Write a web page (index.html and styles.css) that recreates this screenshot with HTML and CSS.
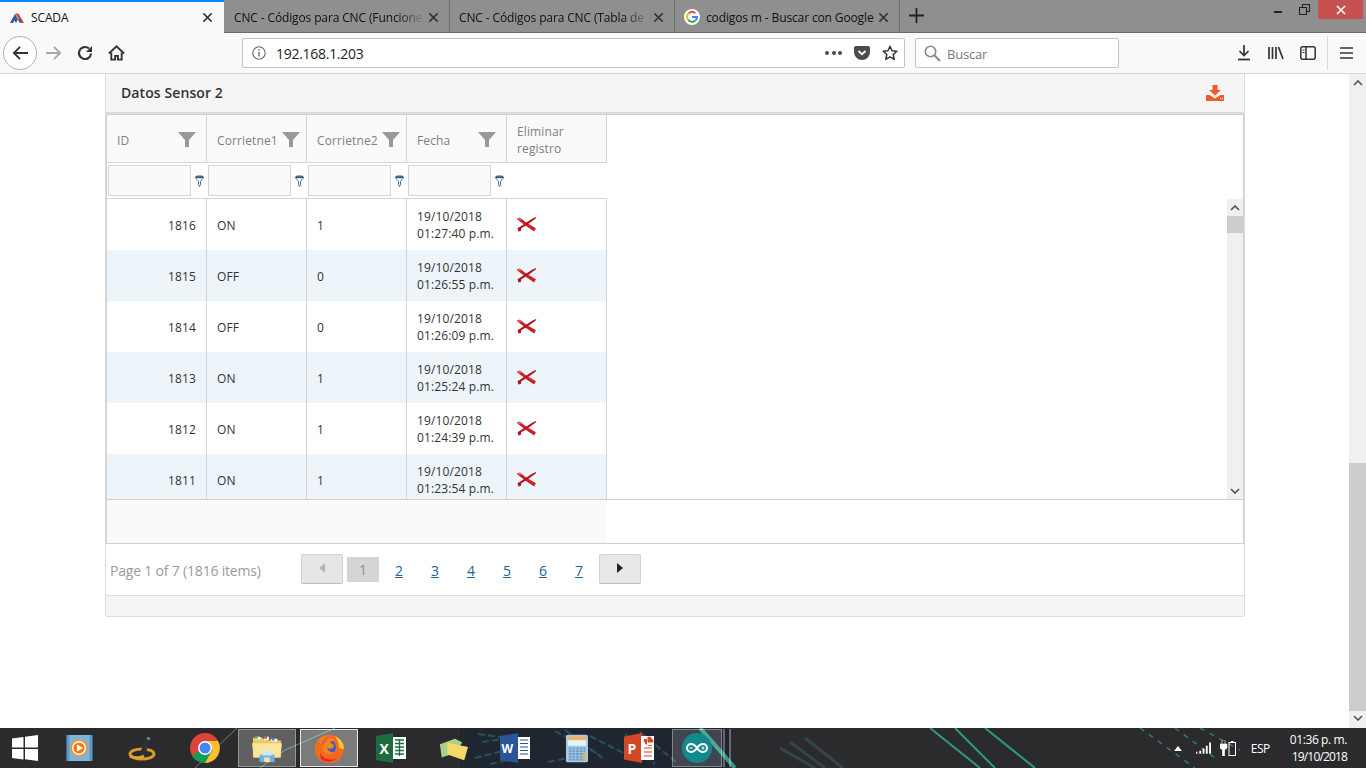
FILE: index.html
```html
<!DOCTYPE html>
<html lang="es">
<head>
<meta charset="utf-8">
<title>SCADA</title>
<link rel="stylesheet" href="styles.css">
</head>
<body>
<svg class="defs" width="0" height="0" aria-hidden="true">
  <defs>
    <symbol id="tab-x" viewBox="0 0 12 12"><path d="M1.500 1.500l9 9M10.500 1.500l-9 9" fill="none" stroke="currentColor" stroke-width="1.600"/></symbol>
    <symbol id="funnel" viewBox="0 0 18 15"><path d="M0 0h18l-7 8v7H7V8z" fill="#999"/></symbol>
    <symbol id="mini-funnel" viewBox="0 0 9 12"><path d="M.5 2C.5.500 8.500.500 8.500 2 8.500 4 6 5 5.500 6.500v3L4.500 11.500 3.500 9.500v-3C3 5 .5 4 .5 2z" fill="#fff" stroke="#3f6a90" stroke-width="1"/><path d="M1 1.200h7v2H1z" fill="#34597d"/></symbol>
    <symbol id="del-x" viewBox="0 0 22 18"><path d="M.5 3 4 1.500l6.500 5.500L21 13l-2 3.500L9 9.500 3 5z" fill="#cf1f26"/><path d="M21.500.8 20.500 3 12 9 5.500 13l-.5 3-2.500.5L1.500 13 4.500 11 10 7.500 17 3z" fill="#b5121b"/><path d="M2.500 3 5 3.500" stroke="#e58b8b" stroke-width="1.500"/></symbol>
  </defs>
</svg>

<header class="tabbar">
  <div class="tab tab-active">
    <svg class="favicon" viewBox="0 0 16 14"><path d="M1 12 6 3l3 5-2 4-1.500-2.500L4 12z" fill="#2d5b9a"/><path d="M6 2.500h3.500L15 12h-3L8.500 6z" fill="#d8452e"/><path d="M9 9l1.500-2 2 4-1.500 1z" fill="#2d5b9a"/></svg>
    <span class="tab-title">SCADA</span>
    <svg class="tab-close"><use href="#tab-x"/></svg>
  </div>
  <div class="tab">
    <span class="tab-title tab-fade">CNC - Códigos para CNC (Funcione</span>
    <svg class="tab-close"><use href="#tab-x"/></svg>
  </div>
  <div class="tab">
    <span class="tab-title tab-fade">CNC - Códigos para CNC (Tabla de</span>
    <svg class="tab-close"><use href="#tab-x"/></svg>
  </div>
  <div class="tab">
    <svg class="favicon-g" viewBox="0 0 16 16"><circle cx="8" cy="8" r="8" fill="#fff"/><path d="M4.700 4.300A5 5 0 0 1 11.300 4.200" fill="none" stroke="#ea4335" stroke-width="2"/><path d="M4.700 4.300A5 5 0 0 0 4 10.500" fill="none" stroke="#fbbc05" stroke-width="2"/><path d="M4 10.500A5 5 0 0 0 11.500 11.500" fill="none" stroke="#34a853" stroke-width="2"/><path d="M11.500 11.500A5 5 0 0 0 13 8H8" fill="none" stroke="#4285f4" stroke-width="2"/></svg>
    <span class="tab-title">codigos m - Buscar con Google</span>
    <svg class="tab-close"><use href="#tab-x"/></svg>
  </div>
  <svg class="new-tab" viewBox="0 0 15 15"><path d="M7.500 0v15M0 7.500h15" stroke="#222" stroke-width="1.800"/></svg>
  <div class="win-controls">
    <svg class="win-btn win-min" viewBox="0 0 21 19"><path d="M8 12h8" stroke="#222" stroke-width="2"/></svg>
    <svg class="win-btn" viewBox="0 0 21 19"><path d="M2.500 7.500h7v7h-7zM5.500 7V4.500h7v7H10" fill="none" stroke="#222" stroke-width="1.100"/></svg>
    <div class="win-close"><svg class="win-close-x" viewBox="0 0 10 10"><path d="M1 1l8 8M9 1l-8 8" stroke="#fff" stroke-width="1.700"/></svg></div>
  </div>
</header>

<nav class="navbar">
  <div class="nav-left">
    <div class="back-btn"><svg viewBox="0 0 18 16" class="nav-ico"><path d="M17 8H2M8.500 1.500 2 8l6.500 6.500" fill="none" stroke="#333" stroke-width="2"/></svg></div>
    <svg viewBox="0 0 18 16" class="nav-ico fwd"><path d="M1 8h15M9.500 1.500 16 8l-6.500 6.500" fill="none" stroke="#a9a9a9" stroke-width="2"/></svg>
    <svg viewBox="0 0 16 16" class="nav-ico reload"><path d="M14 8.500A6 6 0 1 1 12 3.500" fill="none" stroke="#333" stroke-width="2.200"/><path d="M15 1v6H9z" fill="#333"/></svg>
    <svg viewBox="0 0 18 16" class="nav-ico home"><path d="M1 8.500 9 1l8 7.500" fill="none" stroke="#333" stroke-width="2"/><path d="M3.500 7.500V15h4v-4h3v4h4V7.500" fill="none" stroke="#333" stroke-width="2"/></svg>
  </div>
  <div class="urlbar">
    <svg viewBox="0 0 14 14" class="info"><circle cx="7" cy="7" r="6.200" fill="none" stroke="#666" stroke-width="1.100"/><path d="M7 6v4.500M7 3.200v1.500" stroke="#666" stroke-width="1.400"/></svg>
    <span class="url">192.168.1.203</span>
    <span class="url-dots"><i></i><i></i><i></i></span>
    <svg viewBox="0 0 16 14" class="pocket"><path d="M0 2a2 2 0 0 1 2-2h12a2 2 0 0 1 2 2v4a8 8 0 0 1-16 0z" fill="#4a4a4f"/><path d="M4.500 5 8 8.200 11.500 5" fill="none" stroke="#fff" stroke-width="1.800"/></svg>
    <svg viewBox="0 0 16 16" class="star"><path d="M8 1.300l2 4.500 4.800.5-3.600 3.200 1 4.800L8 11.800l-4.200 2.500 1-4.800L1.200 6.300 6 5.800z" fill="none" stroke="#333" stroke-width="1.500" stroke-linejoin="round"/></svg>
  </div>
  <div class="searchbar">
    <svg viewBox="0 0 17 17" class="search-ico"><circle cx="6.500" cy="6.500" r="5.200" fill="none" stroke="#8a8a8a" stroke-width="1.600"/><path d="M10.500 10.500 16 16" stroke="#8a8a8a" stroke-width="2"/></svg>
    <span class="search-ph">Buscar</span>
  </div>
  <div class="nav-right">
    <svg viewBox="0 0 14 16" class="tool"><path d="M7 0v10M2.500 6 7 10.500 11.500 6" fill="none" stroke="#333" stroke-width="1.700"/><path d="M1 14.500h12" stroke="#333" stroke-width="1.800"/></svg>
    <svg viewBox="0 0 16 14" class="tool"><path d="M1 1v12M4.500 1v12M8 1v12M10.500 1l4.500 12" fill="none" stroke="#333" stroke-width="1.700"/></svg>
    <svg viewBox="0 0 16 14" class="tool"><rect x=".8" y=".8" width="14.400" height="12.400" rx="2" fill="none" stroke="#333" stroke-width="1.500"/><path d="M6 1v12" stroke="#333" stroke-width="1.500"/><path d="M2.500 4h2M2.500 6.500h2" stroke="#333"/></svg>
    <span class="nav-sep"></span>
    <svg viewBox="0 0 13 12" class="menu"><path d="M0 1h13M0 6h13M0 11h13" stroke="#333" stroke-width="1.700"/></svg>
  </div>
</nav>

<main class="page">
  <div class="content">
    <section class="panel">
      <div class="panel-head">
        <h2 class="panel-title">Datos Sensor 2</h2>
        <svg viewBox="0 0 18 16" class="export"><path d="M6.500 0h5v5H15L9 10.500 3 5h3.500z" fill="#f1592a"/><path d="M0 10h3.500L9 13.500 14.500 10H18v6H0z" fill="#f1592a"/><path d="M14 13h1v1h-1zM16 13h1v1h-1z" fill="#fff"/></svg>
      </div>
      <div class="grid-box">
        <div class="grid-head">
          <div class="hcell"><span>ID</span><svg class="h-funnel"><use href="#funnel"/></svg></div>
          <div class="hcell hcell-tight"><span>Corrietne1</span><svg class="h-funnel"><use href="#funnel"/></svg></div>
          <div class="hcell hcell-tight"><span>Corrietne2</span><svg class="h-funnel"><use href="#funnel"/></svg></div>
          <div class="hcell"><span>Fecha</span><svg class="h-funnel"><use href="#funnel"/></svg></div>
          <div class="hcell hcell-wrap"><span>Eliminar<br>registro</span></div>
        </div>
        <div class="grid-filter">
          <div class="fcell"><span class="finput"></span><svg class="f-funnel"><use href="#mini-funnel"/></svg></div>
          <div class="fcell"><span class="finput"></span><svg class="f-funnel"><use href="#mini-funnel"/></svg></div>
          <div class="fcell"><span class="finput"></span><svg class="f-funnel"><use href="#mini-funnel"/></svg></div>
          <div class="fcell"><span class="finput"></span><svg class="f-funnel"><use href="#mini-funnel"/></svg></div>
          <div class="fcell"></div>
        </div>
        <div class="grid-body">
          <div class="rows">
            <div class="row"><div class="cell num">1816</div><div class="cell">ON</div><div class="cell">1</div><div class="cell date">19/10/2018<br>01:27:40 p.m.</div><div class="cell"><svg class="del"><use href="#del-x"/></svg></div></div>
            <div class="row alt"><div class="cell num">1815</div><div class="cell">OFF</div><div class="cell">0</div><div class="cell date">19/10/2018<br>01:26:55 p.m.</div><div class="cell"><svg class="del"><use href="#del-x"/></svg></div></div>
            <div class="row"><div class="cell num">1814</div><div class="cell">OFF</div><div class="cell">0</div><div class="cell date">19/10/2018<br>01:26:09 p.m.</div><div class="cell"><svg class="del"><use href="#del-x"/></svg></div></div>
            <div class="row alt"><div class="cell num">1813</div><div class="cell">ON</div><div class="cell">1</div><div class="cell date">19/10/2018<br>01:25:24 p.m.</div><div class="cell"><svg class="del"><use href="#del-x"/></svg></div></div>
            <div class="row"><div class="cell num">1812</div><div class="cell">ON</div><div class="cell">1</div><div class="cell date">19/10/2018<br>01:24:39 p.m.</div><div class="cell"><svg class="del"><use href="#del-x"/></svg></div></div>
            <div class="row alt"><div class="cell num">1811</div><div class="cell">ON</div><div class="cell">1</div><div class="cell date">19/10/2018<br>01:23:54 p.m.</div><div class="cell"><svg class="del"><use href="#del-x"/></svg></div></div>
          </div>
          <div class="vscroll">
            <svg viewBox="0 0 10 6" class="sb-arrow"><path d="M1 5l4-4 4 4" fill="none" stroke="#555" stroke-width="1.700"/></svg>
            <div class="vthumb"></div>
            <svg viewBox="0 0 10 6" class="sb-arrow sb-down"><path d="M1 1l4 4 4-4" fill="none" stroke="#555" stroke-width="1.700"/></svg>
          </div>
        </div>
        <div class="grid-foot"><div class="foot-fill"></div></div>
      </div>
      <div class="pager">
        <span class="pager-info">Page 1 of 7 (1816 items)</span>
        <div class="pager-nav">
          <div class="pg-btn pg-disabled"><svg viewBox="0 0 6 10" class="pg-arrow"><path d="M6 0v10L0 5z" fill="#b5b5b5"/></svg></div>
          <span class="pg-current">1</span>
          <a class="pg-link">2</a><a class="pg-link">3</a><a class="pg-link">4</a><a class="pg-link">5</a><a class="pg-link">6</a><a class="pg-link">7</a>
          <div class="pg-btn"><svg viewBox="0 0 6 10" class="pg-arrow"><path d="M0 0v10l6-5z" fill="#222"/></svg></div>
        </div>
      </div>
      <div class="panel-foot"></div>
    </section>
  </div>
  <div class="page-scroll">
    <svg viewBox="0 0 10 6" class="sb-arrow"><path d="M1 5l4-4 4 4" fill="none" stroke="#555" stroke-width="1.700"/></svg>
    <div class="page-thumb"></div>
    <svg viewBox="0 0 10 6" class="sb-arrow"><path d="M1 1l4 4 4-4" fill="none" stroke="#555" stroke-width="1.700"/></svg>
  </div>
</main>

<footer class="taskbar">
  <svg class="wallpaper" viewBox="0 0 1366 40" preserveAspectRatio="none" aria-hidden="true">
    <path d="M460 0h270v40H460z" fill="#20262f"/>
    <path d="M478 6l30 4M482 14l40-6M475 30l40-10M490 36l35-8M555 3l45 24M565 2l40 30M590 8l35 18M548 34l30-6M625 6l30 30M640 4l36 30" stroke="#2a5a60" stroke-width="2" stroke-dasharray="7 3" opacity=".85" fill="none"/>
    <path d="M237 0 195 40M335 0l-50 22-25 18" stroke="#4f8f86" stroke-width="1" fill="none"/>
    <path d="M700 0l35 40" stroke="#2f9c88" stroke-width="4" fill="none"/>
    <path d="M930 0l50 40M955 0l40 40M985 0l50 40" stroke="#2a9a85" stroke-width="2" fill="none"/>
    <path d="M1140 0l55 40M1175 0l40 30M1200 0l40 22" stroke="#2c7f75" stroke-width="1.500" stroke-dasharray="5 6" fill="none"/>
    <path d="M780 20l35 20M790 14l35 26M805 10l38 30" stroke="#33444c" stroke-width="3" fill="none"/>
  </svg>
  <div class="start">
    <svg viewBox="0 0 26 26" class="start-logo"><path d="M0 3.500 11.500 2v10.500H0zM13 1.800 26 0v12.500H13zM0 14h11.500v10.500L0 23zM13 14h13v12l-13-1.800z" fill="#fff"/></svg>
  </div>
  <div class="task"><svg viewBox="0 0 26 28" class="app"><rect x="0" y="1" width="26" height="26" fill="#5b9bc8"/><rect x="3" y="1" width="20" height="26" fill="#7fb4d8"/><circle cx="12.500" cy="14" r="8.500" fill="#f7941d"/><circle cx="12.500" cy="14" r="7" fill="#fff"/><circle cx="12.500" cy="14" r="5.600" fill="#f27a1a"/><path d="M10.500 10.500v7l6-3.500z" fill="#fff"/></svg></div>
  <div class="task task-wide"><svg viewBox="0 0 28 30" class="app app-lg"><ellipse cx="14" cy="21" rx="12" ry="5" fill="none" stroke="#d99a2b" stroke-width="3"/><path d="M11 24 18 2l6 2-8 20z" fill="#2c3138"/><path d="M19 5l3 1" stroke="#8a9099" stroke-width="2"/><path d="M2 23c6 3 10 2 14 0" stroke="#e3a52f" stroke-width="3" fill="none"/></svg></div>
  <div class="task"><svg viewBox="0 0 30 30" class="app app-lg"><circle cx="15" cy="15" r="15" fill="#db4437"/><path d="M15 15 2 22.500A15 15 0 0 0 15 30l7.500-13z" fill="#0f9d58"/><path d="M15 8h13a15 15 0 0 1-13 22l7.500-13z" fill="#fbc02d"/><circle cx="15" cy="15" r="7" fill="#fff"/><circle cx="15" cy="15" r="5.500" fill="#4285f4"/></svg></div>
  <div class="task task-box"><svg viewBox="0 0 32 30" class="app app-lg"><path d="M1 4h10l3 3h17v18H1z" fill="#f0c75e"/><path d="M3 3h6v3H3zM13 3h5v4h-5zM20 5h7v3h-7z" fill="#fff"/><path d="M3 3h3v2H3z" fill="#3ba34a"/><path d="M13 3h3v2h-3z" fill="#d13a2d"/><path d="M21 5h3v2h-3z" fill="#2f7fc9"/><path d="M0 10h32l-2 15H2z" fill="#fbe6a0"/><path d="M8 22h16v8H8z" fill="#6db4e0"/><path d="M11 18h10v5H11z" fill="#cfe8f7"/><path d="M13 25h6v5h-6z" fill="#fbe6a0"/></svg></div>
  <div class="task task-box task-on"><svg viewBox="0 0 30 30" class="app app-lg"><circle cx="15" cy="16" r="14" fill="#f7831c"/><path d="M15 2c9 0 15 7 15 14 0 8-6 14-15 14S1 24 1 16C1 12 3 8 5 6c0 3 1 4 2 5 1-4 4-8 8-9z" fill="#f26a21"/><path d="M21 3c6 3 9 8 9 13l-5-1c0-5-2-9-4-12z" fill="#fcc82e"/><circle cx="15" cy="14" r="7" fill="#3a5fc4"/><path d="M12 8c3-3 6-3 9-1-2 0-4 1-5 3 3 0 4 2 4 4-2 2-5 2-7 1 1 3 4 5 8 4-3 3-9 3-12-1-2-3-1-7 3-10z" fill="#f7831c"/><path d="M6 20c3 6 11 9 18 4-3 4-9 6-14 4-3-1-4-4-4-8z" fill="#e3262c"/></svg></div>
  <div class="task"><svg viewBox="0 0 30 30" class="app app-lg"><path d="M0 3 17 0v30L0 27z" fill="#1d6b41"/><rect x="17" y="4" width="13" height="22" fill="#fff"/><path d="M19 7h9M19 10.500h9M19 14h9M19 17.500h9M19 21h9M23.500 6v17" stroke="#1d6b41" stroke-width="1.300"/><text x="3.500" y="20.500" class="app-letter">X</text></svg></div>
  <div class="task"><svg viewBox="0 0 32 26" class="app app-lg"><path d="M2 9 18 3l8 4-10 12-12 4z" fill="#a8d08d"/><path d="M10 7l22 5-4 14-18-6z" fill="#f4d96a"/></svg></div>
  <div class="task"><svg viewBox="0 0 30 30" class="app app-lg"><path d="M0 3 18 0v30L0 27z" fill="#2a5699"/><rect x="18" y="4" width="12" height="22" fill="#fff"/><path d="M20 7h8M20 10.500h8M20 14h8M20 17.500h8M20 21h8" stroke="#2a5699" stroke-width="1.200"/><text x="1.500" y="20" class="app-letter app-letter-w">W</text></svg></div>
  <div class="task"><svg viewBox="0 0 24 30" class="app app-calc"><rect width="24" height="30" rx="2" fill="#a6cbe6"/><rect x="2" y="2" width="20" height="4" fill="#f2b15c"/><rect x="2" y="6" width="20" height="6" fill="#e9f2f8"/><path d="M3 15h18M3 18h18M3 21h18M3 24h18M3 27h18" stroke="#6f9cc3" stroke-width="2" stroke-dasharray="3 1"/><path d="M19 20h3v8h-3z" fill="#f0b04b"/></svg></div>
  <div class="task"><svg viewBox="0 0 30 30" class="app app-lg"><path d="M0 3.500 18 0v30L0 26.500z" fill="#d24726"/><rect x="17" y="3" width="13" height="24" fill="#fff"/><path d="M20 6h3v6h6a6 6 0 0 1-9-6z" fill="#d24726"/><path d="M24 4a5 5 0 0 1 5 5h-5zM20 15h8M20 19h8M20 23h8" fill="#d24726" stroke="#d24726"/><text x="3.500" y="20.500" class="app-letter">P</text></svg></div>
  <div class="task task-box task-ard"><svg viewBox="0 0 30 30" class="app app-lg"><circle cx="15" cy="15" r="15" fill="#12888f"/><path d="M15 15c-2-3-4-4-6-4a4 4 0 0 0 0 8c2 0 4-1 6-4zm0 0c2-3 4-4 6-4a4 4 0 0 1 0 8c-2 0-4-1-6-4z" fill="none" stroke="#fff" stroke-width="2"/><path d="M7.500 15h3M19.500 15h3M21 13.500v3" stroke="#fff" stroke-width="1"/></svg><span class="task-stack"></span></div>
  <div class="tray">
    <svg viewBox="0 0 8 5" class="tray-up"><path d="M0 5l4-5 4 5z" fill="#fff"/></svg>
    <svg viewBox="0 0 16 12" class="tray-net"><path d="M0 10h1.500v2H0zM3.500 9h2v3h-2zM7 6.500h2V12H7zM10.500 3.500h2V12h-2zM14 0h2v12h-2z" fill="#fff"/></svg>
    <svg viewBox="0 0 16 16" class="tray-bat"><path d="M2 0v4M5 0v4M0 4h7v4L4.500 10v6h-2v-6L0 8z" fill="#fff" stroke="#fff" stroke-width=".6"/><rect x="9" y="2.500" width="6.500" height="13" fill="none" stroke="#fff"/><rect x="11" y="1" width="2.500" height="1.500" fill="#fff"/></svg>
    <span class="tray-lang">ESP</span>
    <div class="clock"><span>01:36 p. m.</span><span class="clock-date">19/10/2018</span></div>
  </div>
</footer>
</body>
</html>
```

FILE: styles.css
```css
* { box-sizing: border-box; }
html, body { margin: 0; padding: 0; }
body {
  width: 1366px;
  height: 768px;
  overflow: hidden;
  display: flex;
  flex-direction: column;
  font-family: "Open Sans", "Noto Sans", sans-serif;
  background: #fff;
}
.defs { position: absolute; }

/* Tab strip */
.tabbar {
  height: 33px;
  flex: none;
  display: flex;
  background: #8f8f8f;
  border-bottom: 1px solid #6b6b6b;
  color: #111;
}
.tab {
  width: 225px;
  height: 32px;
  display: flex;
  align-items: center;
  padding: 2px 10px 0 9px;
  border-right: 1px solid #6e6e6e;
  font-size: 12px;
  letter-spacing: -.13px;
}
.tab-active {
  background: #f9f9fa;
  border-top: 2px solid #0a84ff;
  border-right: 0;
  width: 224px;
  height: 33px;
  margin-right: 1px;
  padding-top: 0;
  padding-right: 11px;
}
.favicon { width: 16px; height: 14px; margin-right: 6px; flex: none; }
.favicon-g { width: 16px; height: 16px; margin-right: 6px; flex: none; }
.tab-title { flex: 1; white-space: nowrap; min-width: 0; }
.tab-fade {
  -webkit-mask-image: linear-gradient(to right, #000 86%, rgba(0,0,0,.15) 98%);
  mask-image: linear-gradient(to right, #000 86%, rgba(0,0,0,.15) 98%);
}
.tab-close { width: 11px; height: 11px; color: #333; margin-left: 3px; flex: none; }
.new-tab { width: 15px; height: 15px; margin: 8px 0 0 9px; flex: none; }
.win-controls { margin-left: auto; display: flex; align-items: flex-start; padding-right: 3px; }
.win-btn { width: 21px; height: 19px; }
.win-min { margin-right: 10px; }
.win-close {
  width: 45px;
  height: 19px;
  background: #c75050;
  display: flex;
  align-items: center;
  justify-content: center;
}
.win-close-x { width: 10px; height: 10px; }

/* Navigation bar */
.navbar {
  height: 41px;
  flex: none;
  display: flex;
  align-items: center;
  background: #f9f9fa;
  border-bottom: 1px solid #d7d7db;
}
.nav-left { width: 242px; display: flex; align-items: center; padding-left: 3px; flex: none; }
.back-btn {
  width: 34px;
  height: 34px;
  border: 1px solid #b1b1b3;
  border-radius: 50%;
  background: #fff;
  display: flex;
  align-items: center;
  justify-content: center;
}
.nav-ico { width: 17px; height: 16px; }
.fwd { margin-left: 8px; }
.reload { width: 16px; margin-left: 15px; }
.home { margin-left: 15px; width: 17px; }
.urlbar {
  width: 663px;
  height: 30px;
  background: #fff;
  border: 1px solid #c4c4c6;
  border-radius: 2px;
  display: flex;
  align-items: center;
  padding: 0 6px 0 9px;
  flex: none;
}
.info { width: 14px; height: 14px; }
.url { font-size: 14px; letter-spacing: -.28px; margin: 1px 0 0 10px; color: #222; flex: 1; }
.url-dots { display: flex; gap: 2.500px; margin-right: 12px; }
.url-dots i { width: 4px; height: 4px; border-radius: 50%; background: #4a4a4f; display: block; }
.pocket { width: 16px; height: 14px; margin-right: 12px; }
.star { width: 16px; height: 16px; }
.searchbar {
  width: 204px;
  height: 30px;
  margin-left: 10px;
  background: #fff;
  border: 1px solid #c4c4c6;
  border-radius: 2px;
  display: flex;
  align-items: center;
  padding-left: 8px;
  flex: none;
}
.search-ico { width: 17px; height: 17px; }
.search-ph { font-size: 13px; color: #777; margin: 1px 0 0 6px; letter-spacing: -.2px; }
.nav-right { flex: 1; display: flex; align-items: center; padding-left: 117px; }
.tool { width: 16px; height: 16px; margin-right: 16px; flex: none; }
.nav-sep { width: 1px; height: 34px; background: #dcdcde; margin: 0 13px 0 -5px; }
.menu { width: 13px; height: 12px; margin-left: -1px; }

/* Page */
.page { height: 654px; flex: none; display: flex; }
.content { flex: 1; padding: 0 104px 0 105px; min-width: 0; }
.panel {
  height: 543px;
  border: 1px solid #dcdcdc;
  border-top: 0;
  border-radius: 0 0 3px 3px;
  background: #fff;
  display: flex;
  flex-direction: column;
}
.panel-head {
  height: 40px;
  flex: none;
  background: #f5f5f5;
  border-bottom: 2px solid #dcdcdc;
  display: flex;
  align-items: center;
  justify-content: space-between;
  padding: 0 20px 2px 15px;
}
.panel-title { margin: 0; font-size: 14px; font-weight: 600; color: #333; letter-spacing: .09px; }
.export { width: 18px; height: 16px; margin-top: 1px; }
.grid-box {
  height: 430px;
  flex: none;
  border: 1px solid #cfcfcf;
  display: flex;
  flex-direction: column;
  font-size: 12px;
  letter-spacing: .12px;
  color: #333;
}
.grid-head, .grid-filter, .row { display: grid; grid-template-columns: repeat(5, 100px); width: 500px; }
.grid-head { height: 48px; flex: none; background: #fafafa; }
.hcell {
  display: flex;
  align-items: center;
  justify-content: space-between;
  padding: 4px 10px 0 10px;
  border-right: 1px solid #d4d4d4;
  border-bottom: 1px solid #d4d4d4;
  color: #808080;
  white-space: nowrap;
}
.hcell-tight { padding-right: 6px; }
.hcell-wrap { line-height: 17px; padding-top: 2px; }
.h-funnel { width: 18px; height: 15px; margin: -2px 0 0 0; flex: none; }
.grid-filter { height: 36px; flex: none; background: #fff; border-bottom: 1px solid #d4d4d4; }
.fcell { display: flex; align-items: flex-start; padding: 2px 0 0 1px; }
.finput { width: 83px; height: 31px; background: #fafafa; border: 1px solid #d6d6d6; display: block; }
.f-funnel { width: 9px; height: 12px; margin: 10px 0 0 4px; flex: none; }
.grid-body { height: 301px; flex: none; display: flex; justify-content: space-between; border-bottom: 1px solid #cfcfcf; overflow: hidden; }
.rows { width: 500px; height: 300px; overflow: hidden; flex: none; }
.row { height: 51px; }
.alt { background: #edf4fa; }
.cell {
  display: flex;
  align-items: center;
  padding: 2px 10px 0 10px;
  border-right: 1px solid #d4d4d4;
}
.num { justify-content: flex-end; }
.date { line-height: 17px; display: block; padding-top: 9px; white-space: nowrap; }
.del { width: 21px; height: 17px; margin: -3px 0 0 -1px; }
.vscroll {
  width: 16px;
  height: 300px;
  background: #f0f0f0;
  display: flex;
  flex-direction: column;
  align-items: center;
  flex: none;
}
.sb-arrow { width: 10px; height: 6px; flex: none; margin: 6px 0 5px; }
.sb-down { margin: auto 0 5px; }
.vthumb { width: 100%; height: 17px; background: #cdcdcd; flex: none; }
.grid-foot { flex: 1; background: #fff; }
.foot-fill { width: 500px; height: 100%; background: #fafafa; }
.pager {
  height: 52px;
  flex: none;
  border-bottom: 1px solid #dcdcdc;
  display: flex;
  align-items: center;
  padding: 0 0 0 4px;
  font-size: 14px;
  letter-spacing: -.19px;
}
.pager-info { color: #9a9a9a; width: 191px; flex: none; margin-top: 2px; }
.pager-nav { display: flex; align-items: center; margin-top: -1px; }
.pg-btn {
  width: 42px;
  height: 30px;
  background: #e8e8e8;
  border: 1px solid #d4d4d4;
  border-bottom: 1px solid #bdbdbd;
  border-radius: 2px;
  display: flex;
  align-items: center;
  justify-content: center;
}
.pg-disabled { margin-right: 4px; background: #e6e6e6; }
.pg-arrow { width: 6px; height: 10px; margin-top: -2px; }
.pg-current {
  width: 32px;
  height: 25px;
  background: #d5d5d5;
  color: #8f8f8f;
  display: flex;
  align-items: center;
  justify-content: center;
  padding-top: 1px;
  margin-right: 2px;
}
.pg-link {
  width: 36px;
  text-align: center;
  color: #1a6496;
  text-decoration: underline;
  flex: none;
  padding-top: 3px;
}
.pg-link:last-of-type { margin-right: 2px; }
.panel-foot { flex: 1; background: #f5f5f5; border-radius: 0 0 3px 3px; }
.page-scroll {
  width: 17px;
  background: #f0f0f0;
  display: flex;
  flex-direction: column;
  align-items: center;
  flex: none;
}
.page-thumb { width: 100%; height: 248px; background: #cdcdcd; margin-top: auto; }
.page-thumb + .sb-arrow { margin: 4px 0 7px; }

/* Taskbar */
.taskbar {
  height: 40px;
  flex: none;
  display: flex;
  align-items: center;
  background: #2b2b2d;
  position: relative;
  overflow: hidden;
}
.wallpaper { position: absolute; inset: 0; width: 100%; height: 100%; }
.start, .task, .tray { position: relative; }
.start { width: 48px; display: flex; justify-content: center; padding-left: 2px; flex: none; }
.start-logo { width: 26px; height: 26px; }
.task {
  width: 62px;
  height: 38px;
  display: flex;
  align-items: center;
  justify-content: center;
  flex: none;
}
.task-wide { width: 64px; }
.app { width: 27px; height: 28px; }
.app-lg { width: 30px; height: 30px; }
.app-calc { width: 22px; height: 29px; }
.app-letter { font-family: "Open Sans", sans-serif; font-size: 14px; font-weight: 700; fill: #fff; }
.app-letter-w { font-size: 12px; }
.task-box { width: 58px; margin: 0 2px; background: rgba(255,255,255,.25); border: 1px solid rgba(255,255,255,.35); }
.task-on { background: rgba(255,255,255,.38); border-color: #e8e8e8; }
.task-ard { width: 50px; position: relative; background: rgba(255,255,255,.15); }
.task-stack {
  position: absolute;
  left: 50px;
  top: -1px;
  width: 8px;
  height: 38px;
  border-left: 2px solid rgba(255,255,255,.3);
  border-right: 2px solid rgba(255,255,255,.3);
}
.tray {
  margin-left: auto;
  display: flex;
  align-items: center;
  color: #fff;
  font-size: 12px;
  letter-spacing: -.2px;
  padding-right: 19px;
}
.tray-up { width: 8px; height: 5px; margin-right: 14px; }
.tray-net { width: 15px; height: 12px; margin-right: 9px; }
.tray-bat { width: 16px; height: 16px; margin-right: 15px; }
.tray-lang { margin-right: 20px; letter-spacing: -.5px; }
.clock { display: flex; flex-direction: column; align-items: flex-end; line-height: 17px; letter-spacing: -.4px; }
.clock-date { letter-spacing: -.85px; }
```
